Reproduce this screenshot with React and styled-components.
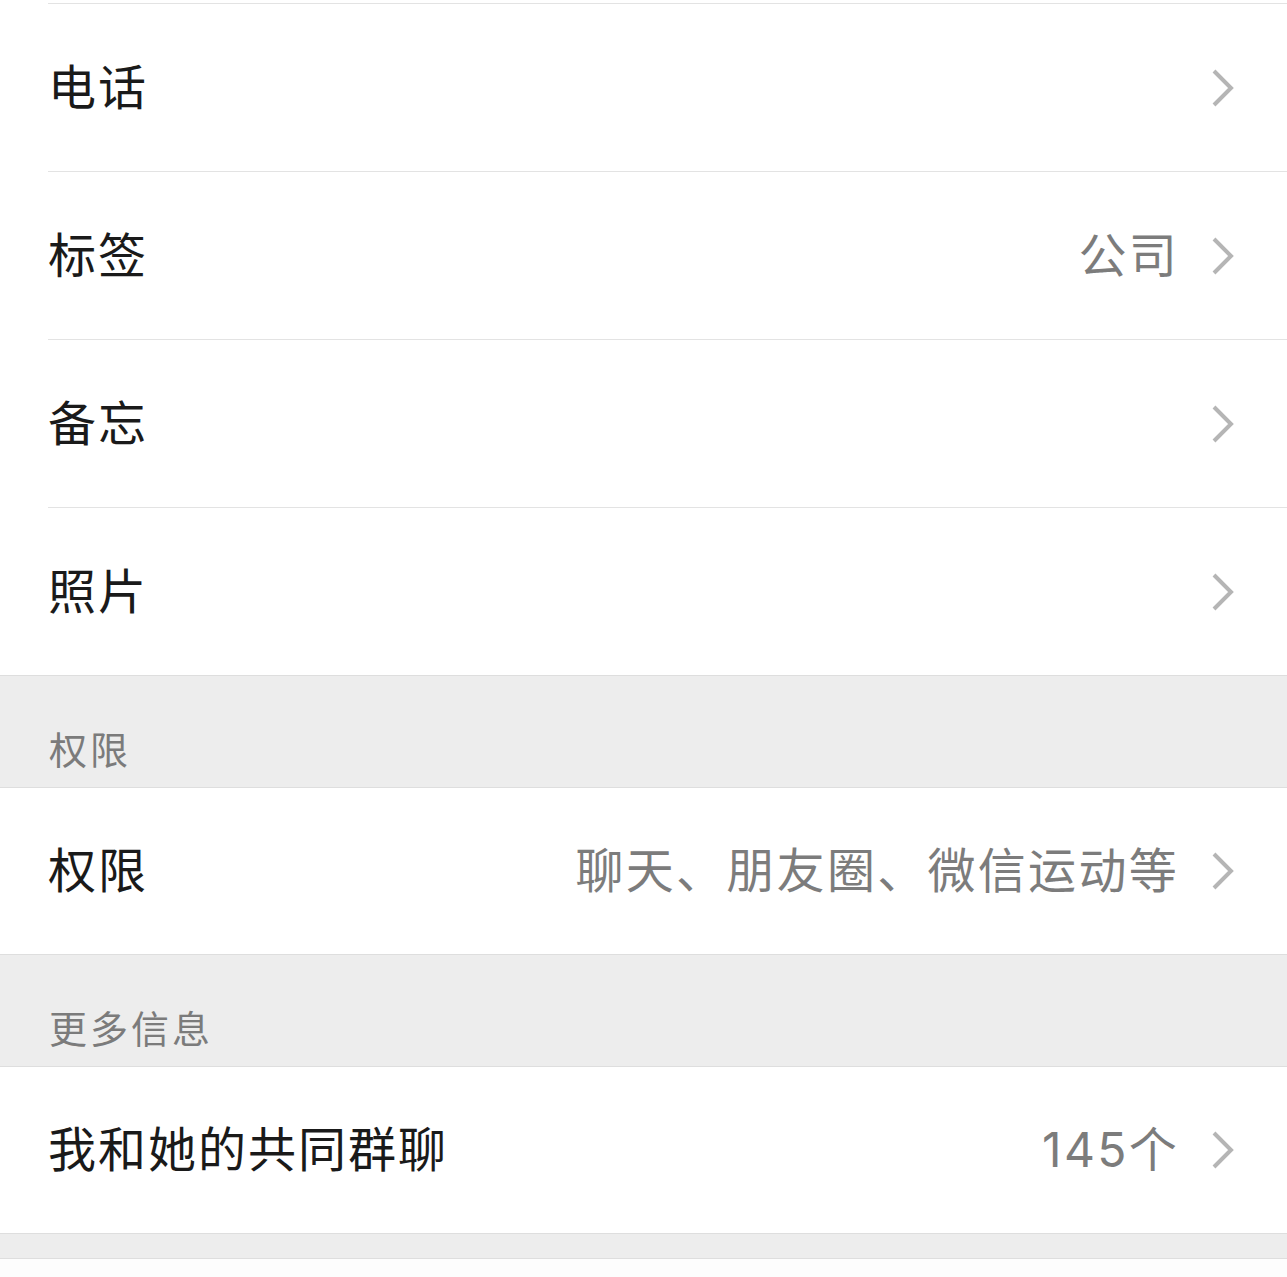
import React from 'react';
import styled, { createGlobalStyle } from 'styled-components';

const GlobalStyle = createGlobalStyle`
	body {
		margin: 0;
		background: #ffffff;
		font-family: Inter, "Noto Sans CJK SC", sans-serif;
		-webkit-font-smoothing: antialiased;
	}
`;

const Page = styled.div`
	width: 100%;
	display: flex;
	flex-direction: column;
	background: #ffffff;
`;

const TopStub = styled.div`
	height: 3px;
	background: #ffffff;
`;

const Row = styled.div`
	background: #ffffff;
	padding-left: 48px;
`;

const RowInner = styled.div`
	box-sizing: border-box;
	height: ${(props) => (props.divided ? '168px' : '166px')};
	border-top: ${(props) => (props.divided ? '1px solid #e3e3e3' : 'none')};
	display: flex;
	align-items: center;
	padding-right: 52px;
`;

const Title = styled.div`
	flex: 1;
	font-size: 48px;
	line-height: 48px;
	letter-spacing: 2px;
	color: #1a1a1a;
	white-space: nowrap;
`;

const Value = styled.div`
	font-size: 48px;
	line-height: 48px;
	letter-spacing: 2.3px;
	color: #7c7c7c;
	margin-right: 32px;
	white-space: nowrap;
`;

const Section = styled.div`
	box-sizing: border-box;
	height: ${(props) => props.height}px;
	background: #ededed;
	border-top: 1px solid #dedede;
	border-bottom: 1px solid #dedede;
	display: flex;
	align-items: flex-end;
	padding: 0 0 18px 49px;
`;

const SectionLabel = styled.div`
	font-size: 38px;
	line-height: 38px;
	letter-spacing: 3px;
	color: #7b7b7b;
`;

const BottomStub = styled.div`
	height: 18px;
	background: #fdfdfd;
`;

const Chevron = () => (
	<svg width="24" height="40" viewBox="0 0 24 40">
		<path
			d="M3 3 L20 20 L3 37"
			fill="none"
			stroke="#b5b5b5"
			strokeWidth="4"
			strokeLinecap="butt"
			strokeLinejoin="miter"
		/>
	</svg>
);

const Cell = ({ title, value, divided }) => (
	<Row>
		<RowInner divided={divided}>
			<Title>{title}</Title>
			{value ? <Value>{value}</Value> : null}
			<Chevron />
		</RowInner>
	</Row>
);

const App = () => (
	<Page>
		<GlobalStyle />
		<TopStub />
		<Cell title="电话" divided />
		<Cell title="标签" value="公司" divided />
		<Cell title="备忘" divided />
		<Cell title="照片" divided />
		<Section height={113}>
			<SectionLabel>权限</SectionLabel>
		</Section>
		<Cell title="权限" value="聊天、朋友圈、微信运动等" />
		<Section height={113}>
			<SectionLabel>更多信息</SectionLabel>
		</Section>
		<Cell title="我和她的共同群聊" value="145个" />
		<Section height={26} />
		<BottomStub />
	</Page>
);

export default App;
